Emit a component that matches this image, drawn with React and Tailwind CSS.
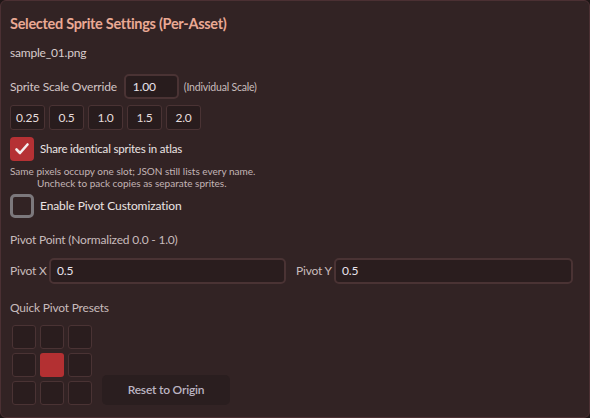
import React from "react";

const font = { fontFamily: 'Lato, "Noto Sans", sans-serif' };

function Chip({ children }) {
  return (
    <div className="h-[25px] w-[35px] flex items-center justify-center rounded-[3px] border border-[#4a3334] bg-[#281c1d] text-[12px] text-[#e6dcdc]">
      {children}
    </div>
  );
}

function Cell({ active }) {
  return (
    <div
      className={
        active
          ? "h-[24px] w-[24px] rounded-[3px] bg-[#b33032]"
          : "h-[24px] w-[24px] rounded-[3px] border border-[#4a3334] bg-[#2a1d1e]"
      }
    />
  );
}

export default function App() {
  return (
    <div style={font} className="w-[590px] h-[418px] bg-[#1f1616]">
      <div className="h-full w-full rounded-[6px] border border-[#4b3033] bg-[#322324] px-[9px] pt-[13px] flex flex-col tracking-[-0.2px]">
        <div className="text-[14.5px] font-bold leading-[20px] text-[#eaa994] tracking-[-0.3px]">
          Selected Sprite Settings (Per-Asset)
        </div>
        <div className="mt-[10px] text-[12px] leading-[18px] text-[#d9cdcd]">sample_01.png</div>
        <div className="mt-[12px] flex items-center">
          <span className="text-[12px] text-[#d2c5c6]">Sprite Scale Override</span>
          <div className="ml-[7px] h-[25px] w-[55px] flex items-center pl-[7px] rounded-[5px] border-2 border-[#4a3334] bg-[#281c1d] text-[12px] text-[#e8e4ec]">
            1.00
          </div>
          <span className="ml-[5px] text-[10.5px] text-[#c8bcbd] mt-[2px]">(Individual Scale)</span>
        </div>
        <div className="mt-[6px] flex gap-[4px]">
          <Chip>0.25</Chip>
          <Chip>0.5</Chip>
          <Chip>1.0</Chip>
          <Chip>1.5</Chip>
          <Chip>2.0</Chip>
        </div>
        <div className="mt-[7px] flex items-center">
          <div className="h-[24px] w-[24px] rounded-[4px] bg-[#b53134] flex items-center justify-center">
            <svg width="16" height="16" viewBox="0 0 16 16" fill="none">
              <path d="M2.5 8.5 L6 12 L13.5 3.5" stroke="#f4eeee" strokeWidth="2.6" strokeLinecap="round" strokeLinejoin="round" />
            </svg>
          </div>
          <span className="ml-[6px] text-[11.5px] text-[#ebe3e3] tracking-[-0.2px]">Share identical sprites in atlas</span>
        </div>
        <div className="mt-[4px] text-[10px] leading-[12px] text-[#c3b5b6] tracking-[0px]">
          <div>Same pixels occupy one slot; JSON still lists every name.</div>
          <div className="pl-[27px]">Uncheck to pack copies as separate sprites.</div>
        </div>
        <div className="mt-[5px] flex items-center">
          <div className="h-[24px] w-[24px] rounded-[5px] border-[3px] border-[#7c787c] bg-[#322324]" />
          <span className="ml-[6px] text-[12px] text-[#ebe3e3] tracking-[-0.1px]">Enable Pivot Customization</span>
        </div>
        <div className="mt-[13px] text-[12px] text-[#c8bbbc]">Pivot Point (Normalized 0.0 - 1.0)</div>
        <div className="mt-[9px] flex items-center">
          <span className="w-[39px] shrink-0 whitespace-nowrap text-[12px] text-[#c8bbbc]">Pivot X</span>
          <div className="h-[26px] w-[237px] shrink-0 flex items-center pl-[6px] rounded-[5px] border-2 border-[#4a3334] bg-[#2a1d1e] text-[12px] text-[#e8e4ec]">
            0.5
          </div>
          <span className="ml-[10px] w-[38px] shrink-0 whitespace-nowrap text-[12px] text-[#c8bbbc]">Pivot Y</span>
          <div className="h-[26px] w-[239px] shrink-0 flex items-center pl-[6px] rounded-[5px] border-2 border-[#4a3334] bg-[#2a1d1e] text-[12px] text-[#e8e4ec]">
            0.5
          </div>
        </div>
        <div className="mt-[15px] text-[12px] text-[#c8bbbc]">Quick Pivot Presets</div>
        <div className="mt-[8px] flex items-end pl-[2px]">
          <div className="grid grid-cols-3 gap-[4px]">
            <Cell /><Cell /><Cell />
            <Cell /><Cell active /><Cell />
            <Cell /><Cell /><Cell />
          </div>
          <div className="ml-[10px] h-[30px] w-[128px] rounded-[5px] bg-[#2a1e1f] flex items-center justify-center text-[12px] font-semibold text-[#bcb4c2]">
            Reset to Origin
          </div>
        </div>
      </div>
    </div>
  );
}
